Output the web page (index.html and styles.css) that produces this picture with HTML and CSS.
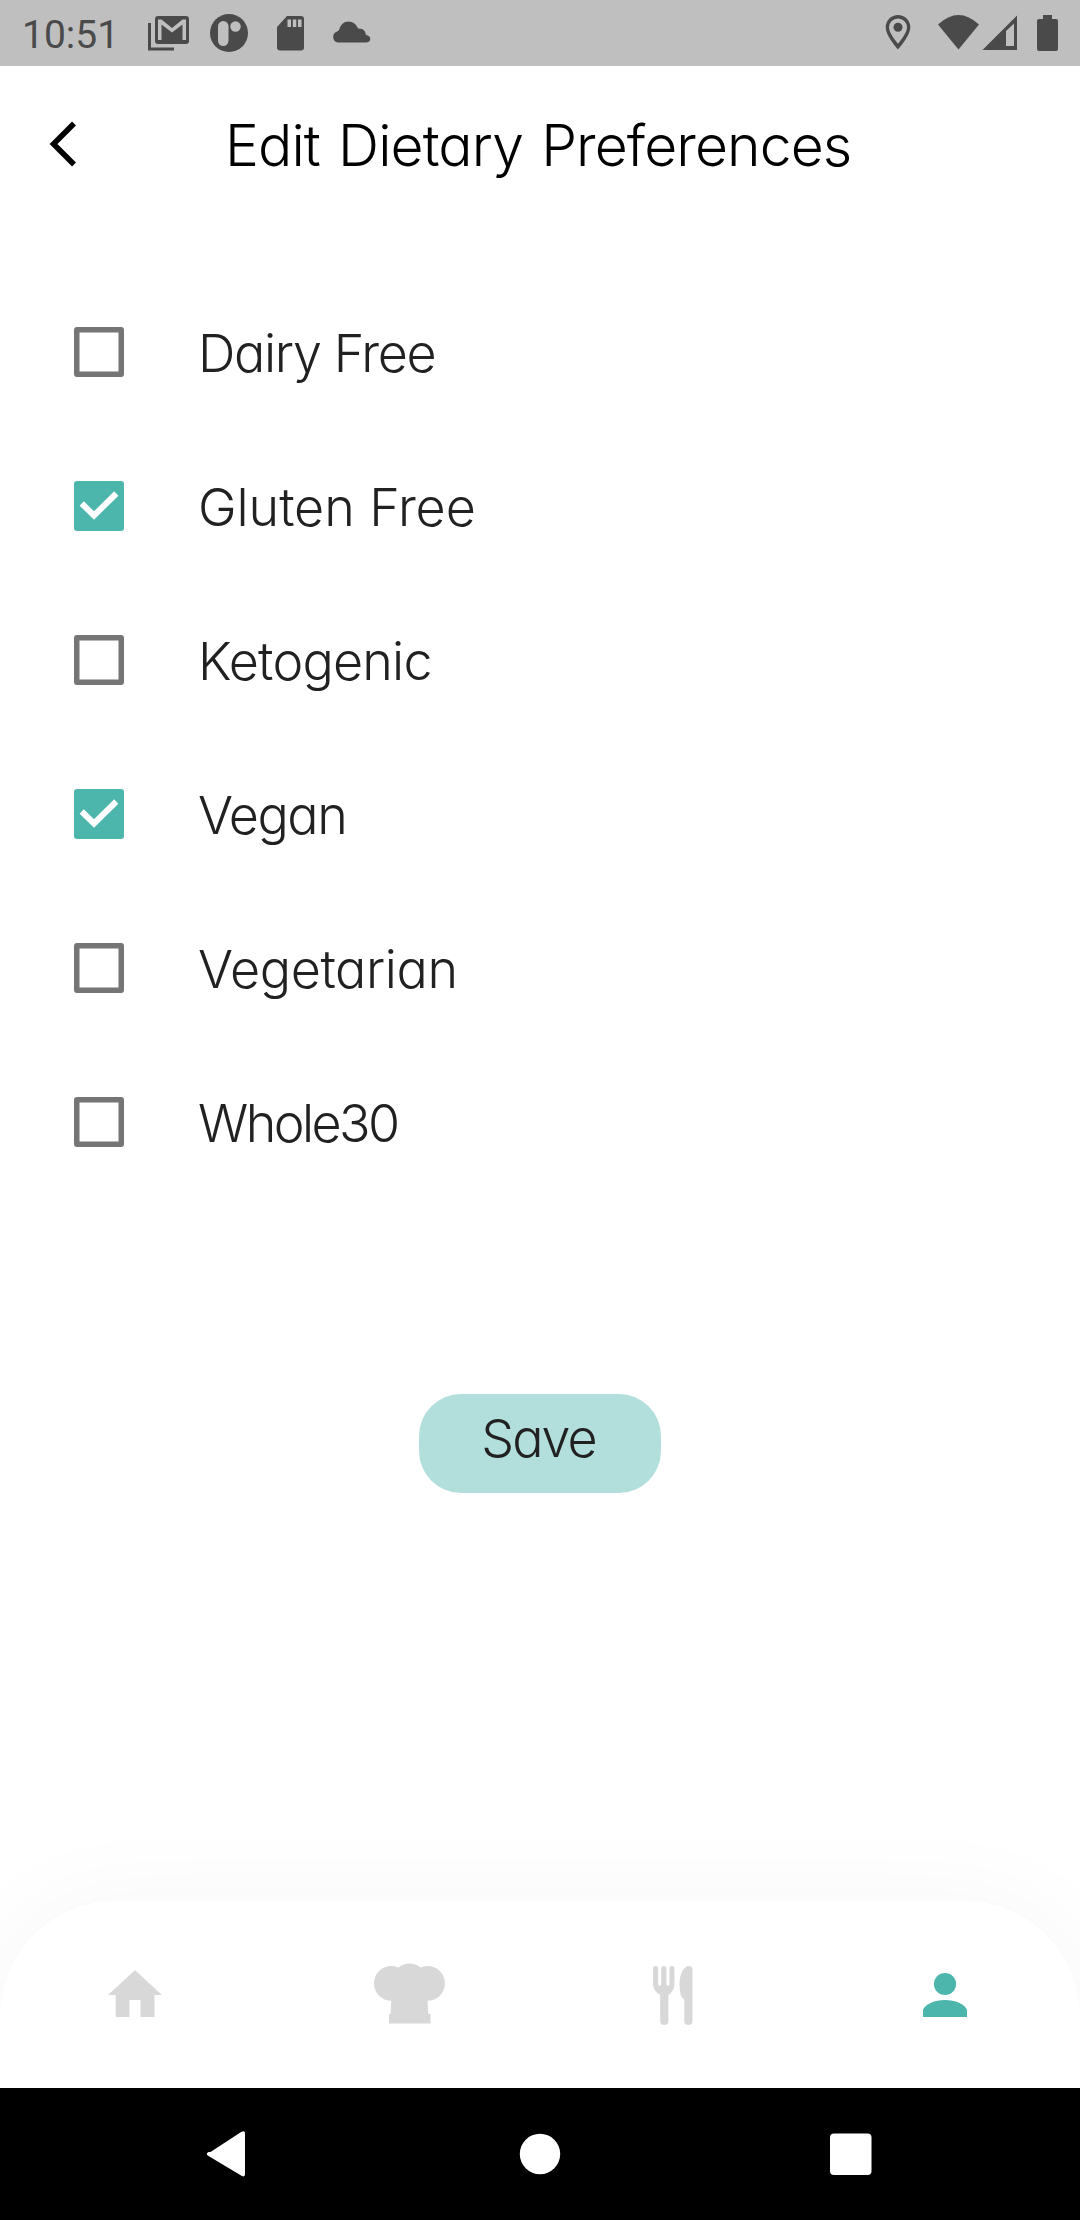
FILE: index.html
```html
<!DOCTYPE html>
<html lang="en">
<head>
<meta charset="utf-8">
<title>Edit Dietary Preferences</title>
<link rel="stylesheet" href="styles.css">
</head>
<body>
<div class="screen">
  <div class="status">
    <span class="time">10:51</span>
    <svg class="status-left" viewBox="0 0 240 66">
      <path d="M9.500 23v26h24.500" fill="none" stroke="currentColor" stroke-width="3"/>
      <rect x="15" y="16" width="34" height="28" rx="3"/>
      <path class="cut" d="M18 19.500h3.500L32 28l10.500-8.500H46V40h-3.500V24.500L32 32.500 21.500 24.500V40H18z"/>
      <circle cx="89" cy="33" r="19"/>
      <rect class="cut" x="78" y="21" width="10.500" height="25" rx="5.200"/>
      <circle class="cut" cx="95.500" cy="26.500" r="5.200"/>
      <path d="M147 16h14q3 0 3 3v28.500q0 3-3 3h-21q-3 0-3-3V27z"/>
      <path class="cut" d="M147.500 19.500h3.500v7.500h-3.500zM152.800 19.500h3.500v7.500h-3.500zM158 19.500h3.500v7.500H158z"/>
      <path d="M198 42.500a5.700 5.700 0 0 1-1-11q1.500-.5 2.300-2C200.500 24.500 204 21.500 208.500 21.500c4.500 0 8 3 9.500 7 5-.5 7.500 2.500 8 6.500 3 .5 4.300 2 4.300 4s-1.800 3.500-4.300 3.500z"/>
    </svg>
    <svg class="status-right" viewBox="0 0 190 66">
      <path fill-rule="evenodd" d="M18 15a12.300 12.300 0 0 0-12.300 12.300C5.700 36 18 49.500 18 49.500S30.300 36 30.300 27.300A12.300 12.300 0 0 0 18 15zm0 3.500a9 9 0 0 1 9 8.800c0 5.200-5.500 12.200-9 16.500-3.500-4.300-9-11.300-9-16.500a9 9 0 0 1 9-8.800z"/>
      <circle cx="18" cy="27.300" r="4.500"/>
      <path d="M58 24.500q20.500-19 41 0L78.500 49.500z"/>
      <path fill-rule="evenodd" d="M102.500 50L137 15.500V50zM126 31v15h8V23.500z"/>
      <path d="M163 15h9v4h4q2 0 2 2v28q0 2-2 2h-17q-2 0-2-2V21q0-2 2-2h4z"/>
    </svg>
  </div>

  <header class="header">
    <svg class="back" viewBox="0 0 30 48"><path d="M26 3.500L5.500 24 26 44.500"/></svg>
    <h1 class="title">Edit Dietary Preferences</h1>
  </header>

  <main class="list">
    <label class="row"><span class="box"></span><span class="label dairy">Dairy Free</span></label>
    <label class="row"><span class="box checked"><svg viewBox="0 0 50 50"><path d="M7.700 22.500L20 34.500 42.300 12.500"/></svg></span><span class="label gluten">Gluten Free</span></label>
    <label class="row"><span class="box"></span><span class="label keto">Ketogenic</span></label>
    <label class="row"><span class="box checked"><svg viewBox="0 0 50 50"><path d="M7.700 22.500L20 34.500 42.300 12.500"/></svg></span><span class="label vegan">Vegan</span></label>
    <label class="row"><span class="box"></span><span class="label vegetarian">Vegetarian</span></label>
    <label class="row"><span class="box"></span><span class="label whole">Whole30</span></label>
    <button class="save" type="button">Save</button>
  </main>

  <nav class="tabs">
    <svg class="tab" viewBox="0 0 80 80"><path d="M40 15.300L67 40h-7.500v22H45.500V45h-11v17H20.700V40H13z"/></svg>
    <svg class="tab" viewBox="0 0 80 80"><path d="M26.500 11q4 0 7 1.500 5-4 11-4t11 4q3-1.500 7-1.500a17.300 17.300 0 0 1 0 34.800l.8 13.200h2.200v9.500H24V59h1.500l.8-13.200A17.400 17.400 0 0 1 26.500 11z"/></svg>
    <svg class="tab" viewBox="0 0 80 80"><path d="M18 13.500a2.600 2.600 0 0 1 5.200 0V29a1.500 1.500 0 0 0 3 0V13.500a2.600 2.600 0 0 1 5.200 0V29a1.500 1.500 0 0 0 3 0V13.500a2.500 2.500 0 0 1 5 0V29q0 7-6 11v26a4.100 4.100 0 0 1-8.200 0V40q-7-4-7.200-11zM57.500 14.500V66a4.100 4.100 0 0 1-8.200 0V44.500q-4.800-2-4.800-15.500c0-10 4.500-18 9.300-18q3.700 0 3.700 3.500z"/></svg>
    <svg class="tab active" viewBox="0 0 80 80"><circle cx="40" cy="29" r="11.100"/><path d="M18 62v-7c2-6 12-10 22-10s20 4 22 10v7z"/></svg>
  </nav>

  <div class="system">
    <svg class="key" viewBox="0 0 60 60"><path d="M20.500 28L51.500 7.800q3.500-1.800 3.500 1.500v41q0 3.300-3.500 1.500L18.500 32q-3.500-2 0-4z"/></svg>
    <svg class="key" viewBox="0 0 60 60"><circle cx="30" cy="30" r="20.200"/></svg>
    <svg class="key" viewBox="0 0 60 60"><rect x="0" y="9.500" width="41.500" height="41.500" rx="4"/></svg>
  </div>
</div>
</body>
</html>
```
FILE: styles.css
```css
* { box-sizing: border-box; }

body {
  margin: 0;
  font-family: Inter, "Open Sans", sans-serif;
  font-feature-settings: "cv11";
  font-weight: 330;
}

svg { display: block; }

.screen {
  display: flex;
  flex-direction: column;
  width: 1080px;
  height: 2220px;
  overflow: hidden;
  background: #fff;
}

.status {
  display: flex;
  align-items: center;
  height: 66px;
  background: #bfbfbf;
  color: #4a4a4a;
  fill: currentColor;
}

.time {
  width: 140px;
  padding: 4px 0 0 22px;
  font: 400 39px/44px Roboto, sans-serif;
}

.status-left { width: 240px; height: 66px; }
.status-right { width: 190px; height: 66px; margin-left: auto; margin-right: 10px; }
.cut { fill: #bfbfbf; }

.header {
  display: flex;
  align-items: center;
  height: 156px;
  padding: 0 48px;
}

.back {
  width: 30px;
  height: 48px;
  margin-top: -1px;
  fill: none;
  stroke: #000;
  stroke-width: 5.500;
}

.title {
  margin: 0 0 0 147px;
  padding-top: 3px;
  font-size: 57px;
  font-weight: 330;
  line-height: 70px;
  letter-spacing: -0.9px;
  word-spacing: 3px;
  white-space: nowrap;
  color: #000;
}

.list {
  display: flex;
  flex-direction: column;
  flex: 1;
  padding: 53px 74px 0;
}

.row {
  display: flex;
  align-items: center;
  gap: 74px;
  height: 154px;
}

.box {
  width: 50px;
  height: 50px;
  border-radius: 3px;
  box-shadow: inset 0 0 0 5.5px #757575;
}

.checked { box-shadow: none; background: #4db6ac; }
.checked path { fill: none; stroke: #fff; stroke-width: 6; }

.label {
  padding-top: 4px;
  font-size: 52px;
  line-height: 60px;
  white-space: nowrap;
  color: #212121;
}

.dairy { letter-spacing: -1.35px; }
.gluten { letter-spacing: -0.1px; }
.keto { letter-spacing: -0.8px; }
.vegan { letter-spacing: -1.5px; }
.vegetarian { letter-spacing: -0.4px; }
.whole { letter-spacing: -2.6px; }

.save {
  align-self: center;
  width: 242px;
  height: 99px;
  margin-top: 195px;
  padding: 0 3px 11px 0;
  border: 0;
  border-radius: 42px;
  background: #b2dfdb;
  color: #212121;
  font: inherit;
  font-size: 52px;
  letter-spacing: -1.9px;
}

.tabs {
  display: grid;
  grid-template-columns: repeat(4, 1fr);
  justify-items: center;
  height: 187px;
  padding-top: 54px;
  border-radius: 115px 115px 0 0;
  background: #fff;
  box-shadow: 0 0 100px rgba(0, 0, 0, 0.04);
}

.tab { width: 80px; height: 80px; fill: #d8d8d8; }
.active { fill: #4db6ac; }

.system {
  position: relative;
  display: flex;
  align-items: center;
  justify-content: space-between;
  height: 132px;
  padding: 0 190px;
  background: #000;
}

.key { width: 60px; height: 60px; fill: #fff; }
```
